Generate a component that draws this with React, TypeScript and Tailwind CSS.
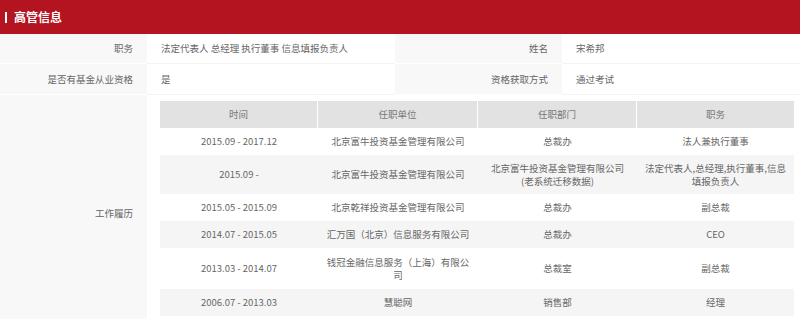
import React from "react";

const rows: { t: string; u: string[]; d: string[]; p: string[]; h: number }[] = [
  { t: "2015.09 - 2017.12", u: ["北京富牛投资基金管理有限公司"], d: ["总裁办"], p: ["法人兼执行董事"], h: 27 },
  { t: "2015.09 -", u: ["北京富牛投资基金管理有限公司"], d: ["北京富牛投资基金管理有限公司", "(老系统迁移数据)"], p: ["法定代表人,总经理,执行董事,信息", "填报负责人"], h: 39 },
  { t: "2015.05 - 2015.09", u: ["北京乾祥投资基金管理有限公司"], d: ["总裁办"], p: ["副总裁"], h: 27 },
  { t: "2014.07 - 2015.05", u: ["汇万国（北京）信息服务有限公司"], d: ["总裁办"], p: ["CEO"], h: 27 },
  { t: "2013.03 - 2014.07", u: ["钱冠金融信息服务（上海）有限公", "司"], d: ["总裁室"], p: ["副总裁"], h: 41 },
  { t: "2006.07 - 2013.03", u: ["慧聪网"], d: ["销售部"], p: ["经理"], h: 27 },
];

function Cell({ lines }: { lines: string[] }) {
  return (
    <div className="flex flex-col items-center justify-center text-center leading-[13px]">
      {lines.map((l, i) => (
        <div key={i}>{l}</div>
      ))}
    </div>
  );
}

export default function App() {
  return (
    <div
      className="w-[800px] h-[319px] overflow-hidden bg-white text-[9.5px] text-[#666]"
      style={{ fontFamily: '"Microsoft YaHei", "Noto Sans CJK SC", "Noto Sans", sans-serif' }}
    >
      <div className="h-[34px] bg-[#b3141f] flex items-center pl-[5px]">
        <div className="w-[2px] h-[11px] bg-white mr-[7px]" />
        <div className="text-white font-bold text-[12px]">高管信息</div>
      </div>
      <div className="grid grid-cols-[147px_248px_167px_1fr]">
        <div className="h-[30px] bg-[#f8f8f8] border-b border-white flex items-center justify-end pr-[14px]">职务</div>
        <div className="h-[30px] border-b border-[#f3f3f3] flex items-center pl-[14px]">法定代表人 总经理 执行董事 信息填报负责人</div>
        <div className="h-[30px] bg-[#f8f8f8] border-b border-white flex items-center justify-end pr-[14px]">姓名</div>
        <div className="h-[30px] border-b border-[#f3f3f3] flex items-center pl-[14px]">宋希邦</div>
        <div className="h-[31px] bg-[#f8f8f8] border-b border-white flex items-center justify-end pr-[14px]">是否有基金从业资格</div>
        <div className="h-[31px] border-b border-[#f3f3f3] flex items-center pl-[14px]">是</div>
        <div className="h-[31px] bg-[#f8f8f8] border-b border-white flex items-center justify-end pr-[14px]">资格获取方式</div>
        <div className="h-[31px] border-b border-[#f3f3f3] flex items-center pl-[14px]">通过考试</div>
      </div>
      <div className="flex">
        <div className="w-[147px] h-[230px] bg-[#f8f8f8] flex items-center justify-end pr-[14px] pt-[6px]">工作履历</div>
        <div className="pl-[13px] pt-[6px]">
          <div className="w-[634px]">
            <div className="grid grid-cols-[158px_160px_159px_157px] h-[27px] bg-[#e2e2e2] text-[#777]">
              <div className="flex items-center justify-center border-r border-white">时间</div>
              <div className="flex items-center justify-center border-r border-white">任职单位</div>
              <div className="flex items-center justify-center border-r border-white">任职部门</div>
              <div className="flex items-center justify-center">职务</div>
            </div>
            {rows.map((r, i) => (
              <div
                key={i}
                className={`grid grid-cols-[158px_160px_159px_157px] ${i % 2 === 1 ? "bg-[#f5f5f5]" : "bg-white"}`}
                style={{ height: r.h }}
              >
                <div className="flex items-center justify-center">{r.t}</div>
                <Cell lines={r.u} />
                <Cell lines={r.d} />
                <Cell lines={r.p} />
              </div>
            ))}
          </div>
        </div>
      </div>
    </div>
  );
}
